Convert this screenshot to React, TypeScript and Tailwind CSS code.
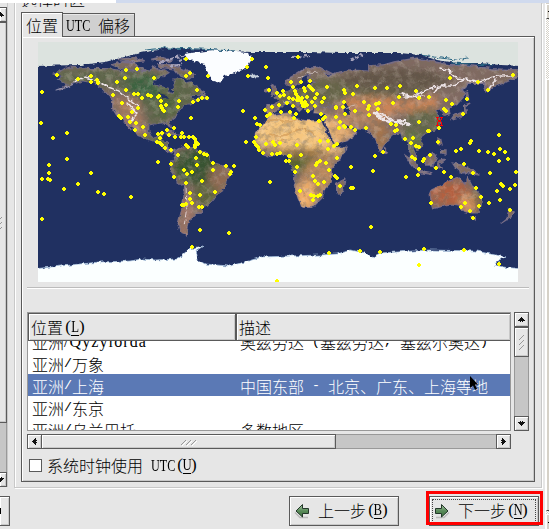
import React from "react";

type Pt = [number, number];

/* Outlines as longitude / latitude pairs */
const LAND: string[] = [
  // North and Central America
  "-168,66 -162,69 -156,71 -141,70 -128,70 -115,68 -108,68 -96,68 -94,72 -90,69 -85,69 -82,67 -87,64 -94,61 -94,58 -90,57 -82,55 -82,52 -79,51 -79,55 -77,57 -78,62 -73,62 -69,59 -65,60 -62,57 -56,53 -59,50 -66,50 -65,48 -61,46 -66,43 -70,43 -71,41 -75,39 -76,35 -81,31 -80,26 -82,27 -84,30 -90,29 -97,28 -97,22 -95,18 -91,19 -87,21 -88,16 -83,15 -83,10 -79,9 -77,8 -80,7 -85,10 -88,13 -94,16 -105,20 -109,26 -114,31 -110,24 -112,26 -117,33 -121,35 -124,40 -124,47 -128,51 -133,56 -139,60 -147,61 -152,59 -159,56 -164,54 -158,58 -162,60 -165,62 -161,64",
  // South America
  "-77,8 -72,12 -62,10 -52,5 -50,0 -44,-2 -35,-6 -35,-9 -39,-14 -40,-20 -46,-24 -48,-27 -53,-33 -58,-34 -57,-38 -62,-39 -65,-42 -67,-46 -68,-51 -68,-55 -73,-53 -75,-47 -73,-39 -71,-30 -70,-19 -76,-14 -81,-5 -80,0 -77,4",
  // Europe and Asia
  "-9,43 -9,37 -5,36 0,39 4,43 9,44 13,41 16,38 18,40 13,45 19,42 22,37 24,40 28,41 33,42 41,41 37,45 32,46 28,44 28,41 27,37 36,36 35,31 39,22 43,13 52,16 59,22 56,25 51,25 48,30 55,26 66,25 70,21 73,17 77,8 80,14 87,21 92,22 94,17 98,16 98,8 103,1 103,6 100,13 105,9 109,12 106,18 110,21 117,24 122,30 120,35 118,39 122,40 125,35 129,36 128,40 135,44 141,51 138,54 143,59 155,59 156,52 163,57 171,60 180,64 180,69 160,70 140,73 128,73 113,76 104,78 87,75 80,73 68,72 68,68 54,69 44,67 38,64 35,67 41,66 31,71 20,70 12,65 5,61 7,58 12,56 17,60 18,64 24,66 22,61 29,60 21,56 18,54 10,54 4,52 -2,49 1,46 -2,43",
  // Africa
  "-6,35 10,37 11,33 20,31 32,31 34,27 38,18 43,11 51,11 47,3 40,-5 40,-15 35,-20 33,-27 26,-34 18,-34 15,-27 12,-17 13,-9 9,-1 9,4 4,6 -8,4 -14,9 -17,14 -17,21 -10,29",
  // Australia
  "114,-22 122,-18 129,-14 136,-12 140,-17 142,-11 146,-19 153,-26 153,-31 150,-38 145,-38 140,-37 136,-33 130,-32 124,-33 116,-35 115,-31",
  // Islands
  "95,6 102,1 106,-6 102,-4 98,1", "109,2 116,7 119,4 116,-3 111,-3", "105,-6 115,-8 114,-9 106,-8",
  "120,1 125,2 121,-1 123,-5 120,-4", "131,-1 140,-3 151,-10 142,-8 138,-8 133,-4",
  "130,32 136,34 141,37 141,43 145,44 140,43 140,38 132,35", "120,18 122,17 123,13 120,14", "122,9 126,9 126,6 122,7",
  "44,-16 50,-13 49,-20 47,-25 44,-23", "-5,50 1,52 -3,57 -5,58 -4,54", "-10,52 -6,53 -7,55 -10,54",
  "173,-35 177,-38 175,-41 167,-46 172,-42", "80,10 82,7 80,6", "-85,22 -77,20 -75,21 -81,23", "-74,20 -69,19 -72,18",
  "142,54 143,46 142,48", "145,-41 148,-41 147,-43", "-56,51 -53,47 -59,48",
  "-124,73 -117,70 -107,69 -100,69 -108,74 -118,75", "-90,73 -80,73 -65,67 -63,65 -67,62 -74,65 -78,70 -89,71",
  "-120,77 -110,75 -100,76 -108,78", "-95,77 -84,75 -80,76 -88,79",
];

const toPath = (s: string) =>
  "M" +
  s
    .split(" ")
    .map((p) => {
      const [lon, lat] = p.split(",").map(Number) as Pt;
      return `${(278 + lon * 1.3333).toFixed(1)} ${(162 - lat * 1.3333).toFixed(1)}`;
    })
    .join("L") +
  "Z";
const LAND_PATH = LAND.map(toPath).join("");

/* Cities, in map canvas units */
const CITIES = `57,75 78,79 91,76 91,82 97,80 98,83 117,82 125,78 126,70 137,69 154,78 42,92 113,95 126,90 134,94 138,94 142,98 148,95 151,96 158,97 159,96 161,101 179,101 178,107 166,105 161,106 162,108 164,111 163,110 138,108 122,103 132,112 128,117 119,116 121,118 130,122 136,123 135,130 143,127 145,135 41,123 53,138 67,133 167,130 174,128 158,134 162,133 169,135 175,137 181,137 182,133 160,138 157,142 160,143 162,145 165,148 171,150
186,59 190,73 186,76 208,76 252,59 247,67 248,76 266,67 268,78 298,57 197,90 193,102 198,100 202,98 207,98 243,111 191,118 255,118 257,124 260,125 265,110 267,116 270,114 272,107 279,105 281,112 269,90 277,93 283,91 280,96 284,95 289,98 287,103 290,112 296,114 294,118 293,87 291,82 301,82 310,81 295,91 296,94 298,97 293,99 293,106 297,100 299,100 302,98 307,97 305,91 304,88 309,86 311,88 313,90 317,94 327,87 315,98 324,98 322,102 312,102 315,106 308,111 307,105 305,106 303,106 302,103 305,102 301,101 321,114 319,121 323,119 325,117 344,90 345,93 353,94 357,86 344,102 343,107 336,107 336,108 345,114 336,117 355,111 364,102 340,122 339,128 344,126 345,127 351,127 355,130
246,142 254,142 256,137 256,145 258,147 259,150 263,153 266,144 273,142 275,145 280,143 272,154 277,154 280,153 289,156 301,155 297,145 320,141 328,141 328,149 334,146 337,144 337,158 184,137 189,137 193,137 195,139 196,142 195,145 198,144 195,147 186,145 188,147 200,152 204,154 207,155 196,158
375,88 387,88 400,86 416,91 399,97 393,103 379,103 376,104 369,106 368,109 369,115 378,109 366,128 419,98 429,97 450,78 478,82 488,90 513,75 467,99 446,100 452,104 444,109 446,111 463,114 419,122 391,124 396,125 395,131 397,130 405,139 413,138 411,143 416,146 419,147 428,131 429,131 439,128 438,142 456,151 461,149 470,143 471,141 479,151 499,135 500,149
49,165 67,159 49,173 42,179 48,179 50,180 64,189 78,184 91,173 98,192 104,194 131,197 42,219 158,162 171,164 178,155 174,177 182,205
192,172 184,170 187,174 197,165 213,163 213,170 226,166 234,166 231,172 230,174 186,183 202,181 215,192 190,193 200,195 190,199 192,203 184,205 186,204 199,207 202,207 200,230 229,233 192,247 277,281 270,182 290,156 286,161 289,161 297,167 295,172 313,176 315,181 318,184 324,182 300,191 311,195 314,196 318,196 320,195 313,200 316,165 317,163 320,161 326,163 329,170 335,176 337,178 340,186 351,167 351,188 353,188 329,253 360,251
375,156 383,152 373,171 406,177 412,157 415,159 418,175 419,169 423,161 424,159 430,155 436,168 444,172 451,177 464,164 473,173 476,188 481,197 479,206 465,203 461,207 470,211 473,218 431,203 489,203 490,173 497,191 501,184 503,186 510,189 515,185 516,172 500,200 510,210 499,161 508,159 505,152 494,154 488,152 371,227 380,252 424,249 464,250 419,265 499,264`
  .split(/\s+/)
  .map((p) => `M${p.replace(",", " ")}m-1-2h2v1h1v2h-1v1h-2v-1h-1v-2h1z`)
  .join("");

const WorldMap = () => (
  <svg viewBox="38 42 480 240" className="block h-[240px] w-[480px]">
    <defs>
      <clipPath id="land"><path d={LAND_PATH} /></clipPath>
      <filter id="coast" x="-2%" y="-2%" width="104%" height="104%">
        <feTurbulence type="fractalNoise" baseFrequency="0.22" numOctaves={2} seed={4} />
        <feDisplacementMap in="SourceGraphic" scale={4.5} xChannelSelector="R" yChannelSelector="G" />
      </filter>
      <filter id="soft" x="-30%" y="-30%" width="160%" height="160%"><feGaussianBlur stdDeviation="3.5" /></filter>
      <filter id="relief" x="0" y="0" width="100%" height="100%">
        <feTurbulence type="fractalNoise" baseFrequency="0.14 0.18" numOctaves={4} seed={9} />
        <feColorMatrix values="0 0 0 0 0.2  0 0 0 0 0.16  0 0 0 0 0.12  2.8 0 0 0 -1.2" />
      </filter>
      <filter id="glint" x="0" y="0" width="100%" height="100%">
        <feTurbulence type="fractalNoise" baseFrequency="0.15" numOctaves={4} seed={21} />
        <feColorMatrix values="0 0 0 0 0.9  0 0 0 0 0.8  0 0 0 0 0.72  0 3 0 0 -1.4" />
      </filter>
    </defs>
    <rect x="38" y="42" width="480" height="240" fill="#203061" />
    <g filter="url(#coast)">
      <path d={LAND_PATH} fill="#806a62" stroke="#766c86" strokeWidth="1.4" />
      <g clipPath="url(#land)">
        <g filter="url(#soft)">
          <path d="M50 70L110 68L190 76L205 98L180 112L165 125L150 126L138 95L110 88L55 82Z" fill="#5c6549" />
          <ellipse cx="145" cy="86" rx="17" ry="12" fill="#3a6340" />
          <ellipse cx="168" cy="105" rx="13" ry="12" fill="#50633c" />
          <path d="M112 100L138 98L144 136L132 132Z" fill="#a97c5e" />
          <ellipse cx="157" cy="141" rx="16" ry="7" fill="#5b6b40" />
          <ellipse cx="197" cy="166" rx="24" ry="18" fill="#395230" />
          <ellipse cx="220" cy="180" rx="12" ry="15" fill="#8f6a52" />
          <ellipse cx="205" cy="195" rx="12" ry="12" fill="#5d633c" />
          <ellipse cx="187" cy="219" rx="9" ry="23" fill="#9c7366" />
          <path d="M265 104L280 94L313 78L400 78L430 93L398 98L330 103Z" fill="#666548" />
          <ellipse cx="395" cy="80" rx="55" ry="11" fill="#625546" />
          <path d="M336 106L350 97L388 97L405 101L440 95L434 113L400 112L380 120L350 115Z" fill="#c98458" />
          <path d="M255 115L318 113L337 142L341 147L323 154L255 145Z" fill="#f6c67e" />
          <path d="M320 113L338 118L358 134L335 144Z" fill="#e5ac70" />
          <path d="M337 112L370 106L376 128L347 127Z" fill="#b08260" />
          <ellipse cx="300" cy="160" rx="23" ry="12" fill="#56642f" />
          <path d="M254 149L330 149L334 158L285 156Z" fill="#986f44" />
          <ellipse cx="320" cy="176" rx="17" ry="18" fill="#bb8a5e" />
          <ellipse cx="305" cy="196" rx="11" ry="15" fill="#f0ae6b" />
          <ellipse cx="335" cy="151" rx="10" ry="6" fill="#e0af76" />
          <ellipse cx="380" cy="136" rx="8" ry="15" fill="#a5744e" />
          <ellipse cx="425" cy="124" rx="22" ry="15" fill="#606548" />
          <ellipse cx="412" cy="142" rx="11" ry="12" fill="#64704a" />
          <ellipse cx="450" cy="193" rx="20" ry="13" fill="#b4603f" />
          <ellipse cx="468" cy="203" rx="9" ry="9" fill="#df965f" />
          <ellipse cx="479" cy="197" rx="5" ry="18" fill="#6d6140" />
        </g>
        <rect x="38" y="42" width="480" height="240" filter="url(#relief)" opacity=".5" />
        <rect x="38" y="42" width="480" height="240" filter="url(#glint)" opacity=".22" />
        <path d="M262 123q10-5 20-2t18-4M270 134q10 5 22-2t22 3M264 140q14 4 20-1" stroke="#d19a57" strokeWidth="1.5" fill="none" opacity=".7" />
      </g>
      <path d="M344 102q6 2 4 6l2 6l-5-1zM158 93l8 2l3 4l-6-1z" fill="#203061" />
      <g fill="none" stroke="#efe6e9" strokeLinecap="round">
        <path d="M74 82L85 77L98 81L108 87L119 91L128 98L138 106M127 103L137 114L130 121" strokeWidth="1.4" strokeDasharray="7 1 3 1" />
        <path d="M186 188L187 206L184 227" strokeWidth=".8" strokeDasharray="5 3" />
        <path d="M374 113L384 115L397 123L411 124M377 116L389 122L404 120" strokeWidth="2.6" strokeDasharray="4 2.5 2 2.500" />
        <path d="M400 93L412 97L426 90L438 86L452 86L466 79L480 82L496 76L512 76M447 70L456 78L465 79M488 90L496 79M404 97L424 96M434 92L445 84M440 68L452 72" strokeWidth="1.6" strokeDasharray="6 1.500 2 1.500" />
        <path d="M283 102L291 101M299 78L309 72L318 73M344 108L355 105" strokeWidth=".8" opacity=".7" />
        <path d="M56 90L68 87L76 82" strokeWidth="1" stroke="#9996af" />
      </g>
      <path d="M160 63L176 57L190 55M170 67L182 64M178 61L196 56M350 60L361 55L365 57M292 57L310 56" fill="none" stroke="#a9a5bd" strokeWidth="2.2" strokeDasharray="4 1.500" />
      <path d="M184 54L213 50L248 53L252 59L247 67L235 73L225 76L220 83L213 81L207 71L205 64L189 60Z" fill="#fbfdff" />
      <path d="M249 75L259 74L259 77L252 78Z" fill="#c6d0dc" />
      <path d="M33 37H523V66L500 65L480 63L456 63L437 60L420 55L400 53L370 53L340 53L310 52L250 52L220 50L190 49L163 49L140 53L105 62L80 65L33 66Z" fill="#dce3df" />
      <path d="M145 50L165 48L200 49L235 51M420 55L455 60L468 58M451 63L492 65" fill="none" stroke="#286481" strokeWidth="1.2" />
      <path d="M33 269L80 264L100 262L130 261L142 259L155 260L178 259L189 249L203 246L196 251L198 260L205 264L229 266L245 262L262 257L320 255L337 254L350 250L366 253L371 258L380 253L430 250L476 251L505 257L497 261L495 265L503 267L523 269V287H33Z" fill="#fbffff" stroke="#a9c5e2" strokeWidth=".7" />
    </g>
    <path d="M38 42H518V46H38ZM38 277H518V282H38Z" fill="#dce3df" opacity="0" />
    <rect x="38" y="276" width="480" height="6" fill="#fbffff" />
    <path d={CITIES} fill="#ffff00" shapeRendering="crispEdges" />
    <path d="M436 117h3v1h-3zM440 117h3v1h-3zM437 118h1v2h-1zM441 118h1v2h-1zM438 120h3v2h-3zM437 122h1v3h-1zM441 122h1v3h-1zM436 125h3v1h-3zM440 125h3v1h-3z" fill="#f00" shapeRendering="crispEdges" />
  </svg>
);

/* Half-width latin runs: 8px advance beside 16px ideographs */
const L = ({ children }: { children: React.ReactNode }) => (
  <span className="inline-block h-4 align-top font-['Liberation_Mono',monospace] text-[13.333px] leading-4 font-normal">{children}</span>
);
const Utc = () => (
  <span className="inline-block h-4 w-[24px] origin-left scale-x-[0.76] align-top font-['Liberation_Serif',serif] text-[16px] leading-[17px] font-normal">UTC</span>
);
/* Mnemonic in brackets, one 8px cell for each glyph */
const Key = ({ c }: { c: string }) => (
  <span className="inline-flex h-4 align-top font-['Liberation_Serif',serif] text-[17px] leading-4 font-normal">
    <span className="w-[8px] text-right">(</span>
    <span className="flex h-[17px] w-[8px] justify-center border-b border-current"><span className="scale-x-[0.75]">{c}</span></span>
    <span className="w-[8px]">)</span>
  </span>
);

const RAISED = "border border-[#5a5a5a] bg-[#e6e6e6] shadow-[inset_1px_1px_0_#fff,inset_-1px_-1px_0_#c8c8c8]";

const Arrow = ({ turn }: { turn: string }) => (
  <svg viewBox="0 0 7 7" className={`h-[7px] w-[7px] ${turn}`} shapeRendering="crispEdges">
    <path d="M3 1h1v1h1v1h1v1h1v1H5v1H4V5H3v1H2V5H0V4h1V3h1V2h1z" fill="#111" />
  </svg>
);

const Grip = () => (
  <svg viewBox="0 0 17 8" className="h-2 w-[17px]">
    <path d="M1 7l5-5M6 7l5-5M11 7l5-5" stroke="#999" fill="none" />
    <path d="M2 8l5-5M7 8l5-5M12 8l5-5" stroke="#fff" fill="none" />
  </svg>
);

const GreenArrow = ({ flip = "" }: { flip?: string }) => (
  <svg viewBox="0 0 16 16" className={`h-4 w-4 shrink-0 ${flip}`}>
    <defs><linearGradient id="leaf" x2="0" y2="1"><stop stopColor="#a6c8a4" /><stop offset=".5" stopColor="#5b8c5b" /><stop offset="1" stopColor="#3c703e" /></linearGradient></defs>
    <path d="M2 14.5h8l5-5" stroke="#bbb" fill="none" strokeWidth="1.5" />
    <path d="M1.5 5.5h6v-4L14 8l-6.5 6v-3.500h-6z" fill="url(#leaf)" stroke="#24382a" />
  </svg>
);

const Row = ({ place, note, on = false }: { place: React.ReactNode; note?: React.ReactNode; on?: boolean }) => (
  <div className={`flex h-[22px] shrink-0 items-center pt-px pl-1 leading-4 ${on ? "bg-[#5b79b5] text-white" : ""}`}>
    <span className="h-4 w-[208px] shrink-0">{place}</span>
    <span className="h-4">{note}</span>
  </div>
);

export default function App() {
  return (
    <div className="relative flex h-[529px] w-[549px] flex-col overflow-hidden whitespace-pre bg-[#e6e6e6] font-['Noto_Sans_CJK_SC',sans-serif] text-[16px] leading-4 font-light text-black">
      <div className="flex h-[3px] shrink-0">
        <div className="w-[116px] bg-white" />
        <div className="flex-1 bg-[#d0daee]" />
      </div>
      <div className="flex h-[526px]">
        {/* left pane edge */}
        <div className="flex w-[14px] shrink-0 flex-col">
          <div className="flex h-[484px] w-[8px] flex-col border-r border-[#c8c8c8]">
            <div className="h-[4px]" />
            <div className={`flex h-[15px] w-[7px] items-center justify-end overflow-hidden border-l-0 ${RAISED}`}><Arrow turn="mr-[2px] shrink-0" /></div>
            <div className="flex h-[401px] w-[7px] items-center overflow-hidden border-t border-r border-b border-[#5a5a5a] bg-[#e6e6e6] shadow-[inset_-1px_-1px_0_#c8c8c8]">
              <svg viewBox="0 0 3 14" className="h-[14px] w-[3px]"><path d="M0 3l2-2M0 8l2-2M0 13l2-2" stroke="#999" /></svg>
            </div>
            <div className="h-[49px] w-[7px] border-r border-[#999] bg-[#c6c6c6]" />
            <div className={`flex h-[15px] w-[7px] items-center justify-end overflow-hidden border-l-0 ${RAISED}`}><Arrow turn="mr-[2px] shrink-0 rotate-180" /></div>
          </div>
          <div className="h-[9px]" />
          <div className={`flex h-[30px] w-[10px] items-center border-l-0 ${RAISED}`}><div className="h-[6px] w-[1px] bg-black" /></div>
        </div>

        {/* wizard page */}
        <div className="flex w-[531px] shrink-0 flex-col">
          <div className="h-[485px] w-[528px] border-r border-b border-l border-[#c8c8c8] pl-[6px] shadow-[inset_1px_0_0_#fff,1px_1px_0_#fff]">
            <div className="flex h-[4px] items-end overflow-hidden"><span className="leading-4">选择时区</span></div>
            <div className="flex h-[29px] items-end">
              <div className="z-10 mb-[-1px] flex h-[25px] w-[42px] items-center border border-b-0 border-[#5a5a5a] bg-[#e6e6e6] pb-px pl-[4px] shadow-[inset_1px_1px_0_#fff]">位置</div>
              <div className="flex h-[23px] w-[72px] items-center border border-b-0 border-l-0 border-[#5a5a5a] bg-[#d0d0d0] pl-[3px] shadow-[inset_0_1px_0_#e8e8e8]"><span className="h-4"><Utc /><L> </L>偏移</span></div>
            </div>
            <div className="flex h-[446px] w-[514px] flex-col border border-[#5a5a5a] px-[5px] pt-[5px] shadow-[inset_1px_1px_0_#fff,inset_-1px_-1px_0_#c8c8c8]">
              <div className="pl-[11px]"><WorldMap /></div>
              <div className="mt-[5px] h-[2px] w-[502px] border-t border-b border-t-[#bcbcbc] border-b-white" />
              <div className="mt-[23px] flex h-[119px] gap-[3px]">
                <div className="flex w-[484px] flex-col overflow-hidden border border-[#999] bg-white">
                  <div className="flex h-[28px] shrink-0 border-t border-b border-[#5a5a5a] bg-[#e6e6e6]">
                    <div className="flex w-[208px] items-center border-r border-l border-[#5a5a5a] pb-px pl-[2px] shadow-[inset_1px_1px_0_#fff,inset_-1px_-1px_0_#c8c8c8]">位置<Key c="L" /></div>
                    <div className="flex flex-1 items-center border-l border-[#5a5a5a] pl-[2px] shadow-[inset_1px_1px_0_#fff,inset_-1px_-1px_0_#c8c8c8]">描述</div>
                  </div>
                  <div className="flex h-[89px] flex-col overflow-hidden">
                    <div className="mt-[-11px]">
                      <Row
                        place={<>亚洲<span className="inline-block h-4 align-top font-['Liberation_Serif',serif] font-normal tracking-[1.1px]">/Qyzylorda</span></>}
                        note={<>奥兹劳达<L> (</L>塞兹劳达<L>, </L>塞兹尔奥达<L>)</L></>}
                      />
                    </div>
                    <Row place={<>亚洲<L>/</L>万象</>} />
                    <Row on place={<>亚洲<L>/</L>上海</>} note={<>中国东部<L> - </L>北京、广东、上海等地</>} />
                    <Row place={<>亚洲<L>/</L>东京</>} />
                    <Row place={<>亚洲<L>/</L>乌兰巴托</>} note="多数地区" />
                  </div>
                </div>
                <div className="flex w-[15px] flex-col border-r border-[#999] bg-[#c6c6c6]">
                  <div className={`flex h-[15px] w-[15px] items-center justify-center ${RAISED}`}><Arrow turn="" /></div>
                  <div className={`flex h-[30px] w-[15px] items-center justify-center ${RAISED}`}>
                    <svg viewBox="0 0 7 17" className="h-[17px] w-[7px]"><path d="M1 6l5-5M1 11l5-5M1 16l5-5" stroke="#999" /></svg>
                  </div>
                  <div className="flex-1 border-l border-[#999]" />
                  <div className={`flex h-[15px] w-[15px] items-center justify-center ${RAISED}`}><Arrow turn="rotate-180" /></div>
                </div>
              </div>
              <div className="mt-[3px] flex h-[15px] w-[484px] border-y border-[#999] bg-[#c6c6c6]">
                <div className={`-my-px flex w-[15px] items-center justify-center ${RAISED}`}><Arrow turn="-rotate-90" /></div>
                <div className={`-my-px -ml-px flex w-[295px] items-center justify-center ${RAISED}`}><Grip /></div>
                <div className="flex-1" />
                <div className={`-my-px flex w-[15px] items-center justify-center ${RAISED}`}><Arrow turn="rotate-90" /></div>
              </div>
              <div className="mt-[6px] flex h-[20px] items-center pl-[2px]">
                <div className="mr-[5px] h-[13px] w-[13px] border border-[#5a5a5a] bg-white" />
                <span className="h-[17px]">系统时钟使用<L> </L><Utc /><Key c="U" /></span>
              </div>
            </div>
          </div>
          <div className="mt-[8px] flex h-[30px] gap-[30px] pl-[275px]">
            <div className={`flex w-[110px] items-center pl-[4px] ${RAISED}`}>
              <GreenArrow flip="-scale-x-100" /><span className="ml-[8px] h-[18px]">上一步<Key c="B" /></span>
            </div>
            <div className={`w-[110px] p-[2px] ${RAISED}`}>
              <div className="flex h-[24px] items-center border border-dotted border-[#444] pl-[1px]">
                <GreenArrow /><span className="ml-[8px] h-[18px]">下一步<Key c="N" /></span>
              </div>
            </div>
          </div>
        </div>

        {/* outer window scrollbar */}
        <div className="flex w-[4px] shrink-0 flex-col border-l border-white bg-[#d5d1c8]">
          <div className="h-[1px]" />
          <div className="flex h-[15px] items-center border-t border-l border-b border-t-white border-l-white border-b-[#404040]"><div className="ml-[1px] h-[1px] w-[2px] bg-black" /></div>
          <div className="h-[60px] bg-[repeating-conic-gradient(#fff_0_25%,#d5d1c8_0_50%)] bg-[length:2px_2px]" />
          <div className="h-[432px] border-t border-b border-l border-t-white border-b-[#404040] border-l-white" />
          <div className="h-[3px] bg-[repeating-conic-gradient(#fff_0_25%,#d5d1c8_0_50%)] bg-[length:2px_2px]" />
          <div className="flex flex-1 items-center border-t border-l border-white"><div className="ml-[1px] h-[1px] w-[2px] bg-black" /></div>
        </div>
      </div>

      {/* highlight over the next button, and mouse pointer */}
      <div className="absolute top-[491px] left-[426px] h-[34px] w-[117px] border-[3px] border-[#f00]" />
      <svg viewBox="0 0 10 16" className="absolute top-[376px] left-[469px] h-4 w-[10px]"><path d="M1 0L9 8.500H6L8 13L6 14L4 9.500L1 12Z" fill="#000" /></svg>
    </div>
  );
}
